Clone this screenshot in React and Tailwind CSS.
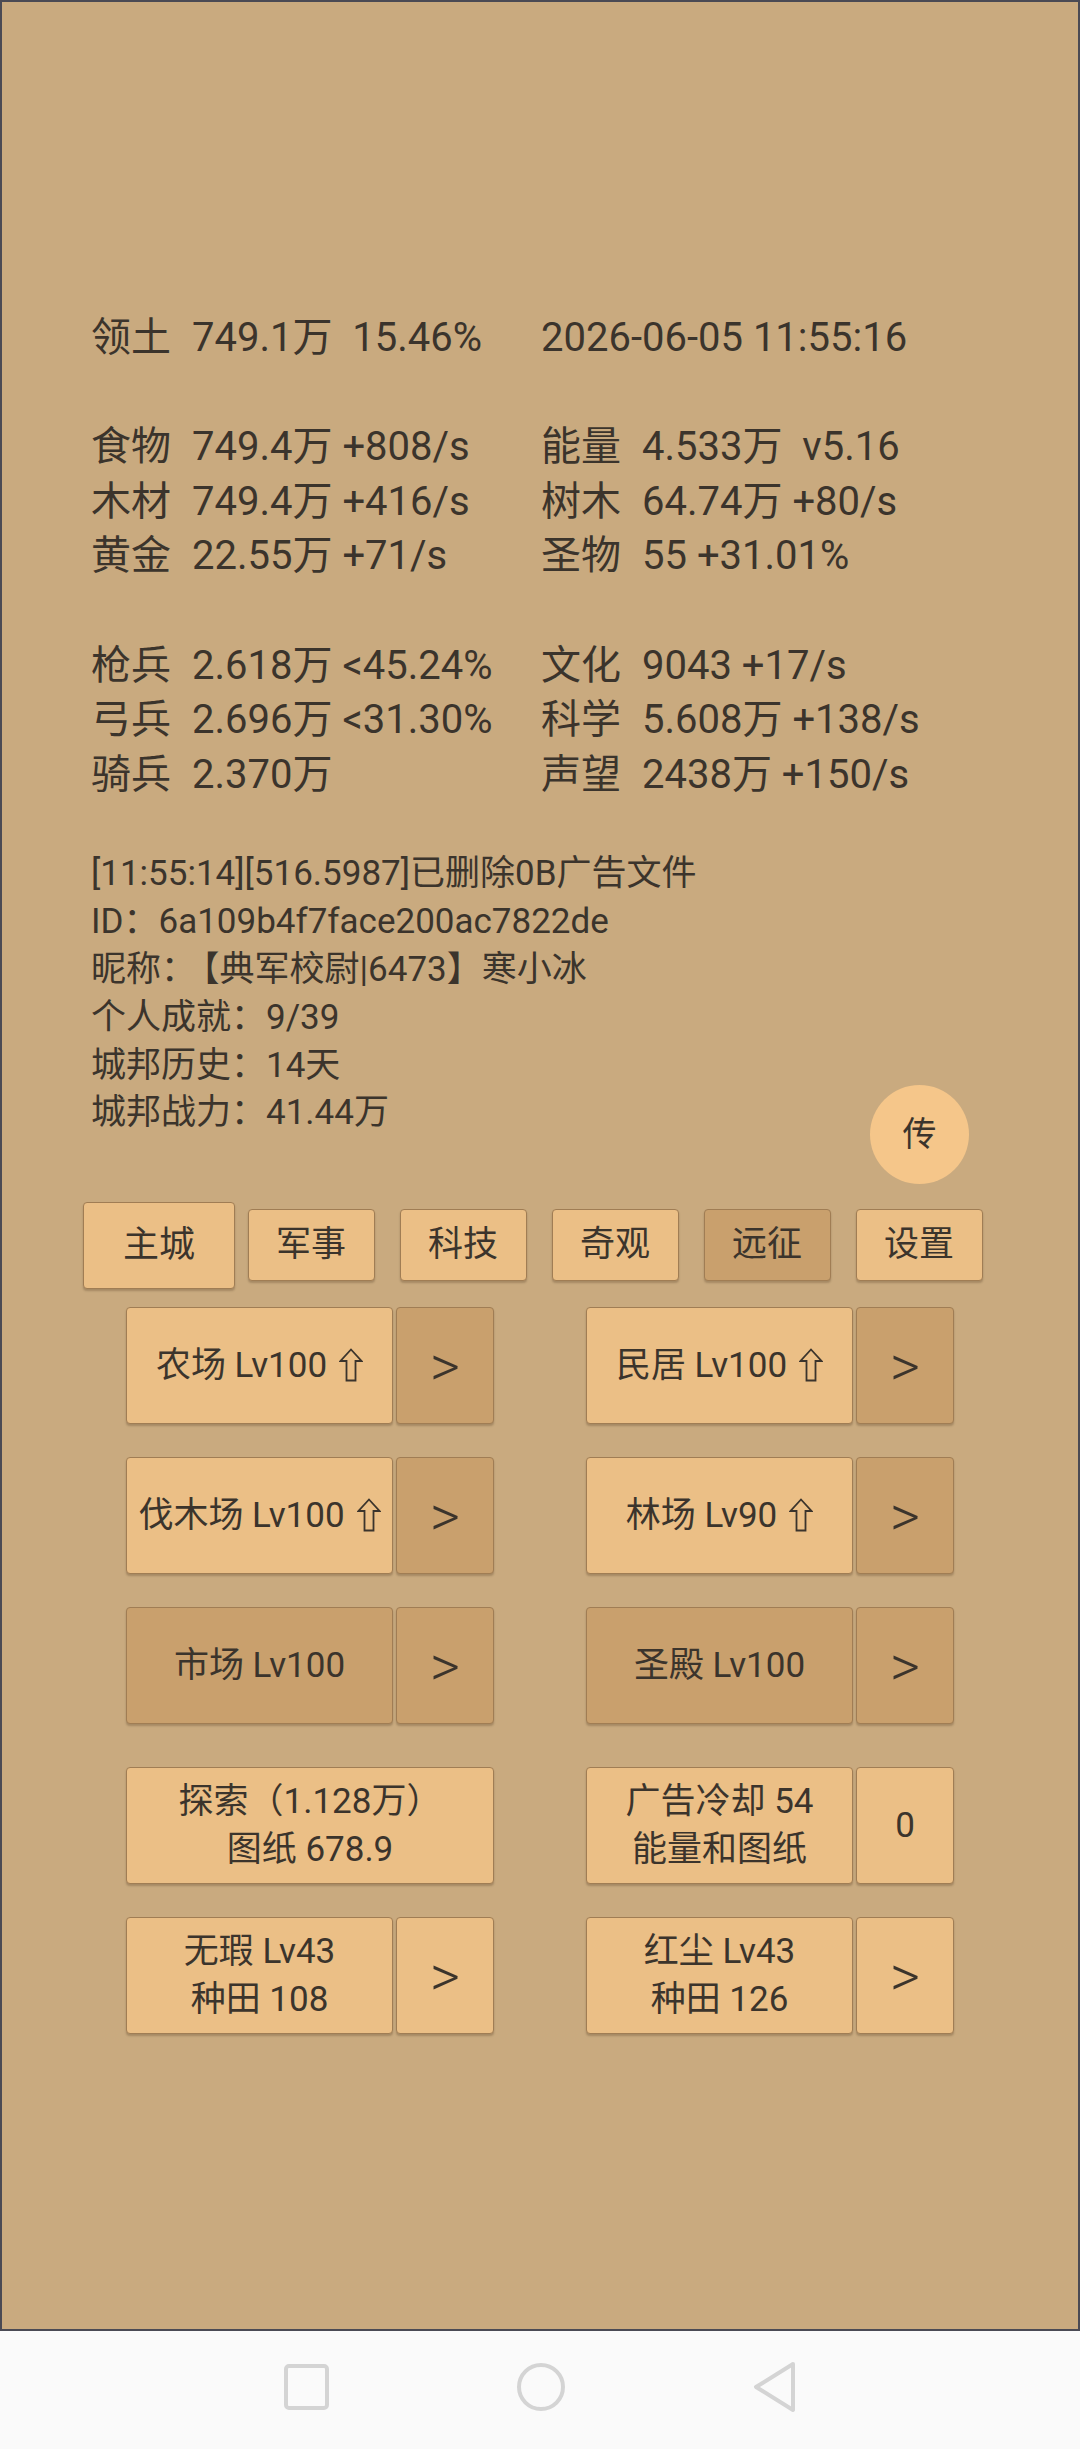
const stats = [
  [["领土", "749.1万  15.46%"], [null, "2026-06-05 11:55:16"]],
  null,
  [["食物", "749.4万 +808/s"], ["能量", "4.533万  v5.16"]],
  [["木材", "749.4万 +416/s"], ["树木", "64.74万 +80/s"]],
  [["黄金", "22.55万 +71/s"], ["圣物", "55 +31.01%"]],
  null,
  [["枪兵", "2.618万 <45.24%"], ["文化", "9043 +17/s"]],
  [["弓兵", "2.696万 <31.30%"], ["科学", "5.608万 +138/s"]],
  [["骑兵", "2.370万"], ["声望", "2438万 +150/s"]],
];

const logs = [
  "[11:55:14][516.5987]已删除0B广告文件",
  "ID：6a109b4f7face200ac7822de",
  null,
  "个人成就：9/39",
  "城邦历史：14天",
  "城邦战力：41.44万",
];

const tabs = ["军事", "科技", "奇观", "远征", "设置"];

const btnBase =
  "flex items-center justify-center rounded-[4px] border border-[#a07d54] shadow-[0_2px_2px_rgba(60,40,20,0.25)] text-[35px] leading-[48px] text-[#3b342c]";
const light = "bg-[#ebbf86]";
const dark = "bg-[#c9a06d]";

function Cell({ cell }) {
  const [label, value] = cell;
  return (
    <div className="flex w-[450px] whitespace-pre">
      {label && <span className="w-[101px] shrink-0">{label}</span>}
      <span>{value}</span>
    </div>
  );
}

function UpArrow() {
  return (
    <svg width="24" height="34" viewBox="0 0 24 34" className="ml-[12px] -mt-[2px]">
      <path
        d="M12 1.5 L22.5 13 H16.5 V32.5 H7.5 V13 H1.5 Z"
        fill="none"
        stroke="#3b342c"
        strokeWidth="1.8"
        strokeLinejoin="miter"
      />
    </svg>
  );
}

function Arrow({ tone = dark }) {
  return (
    <div className={`${btnBase} ${tone} w-[98px] h-[117px] text-[58px] font-light`}>
      &gt;
    </div>
  );
}

function Building({ name, up, tone = light, arrowTone = dark }) {
  return (
    <div className="flex gap-[3px]">
      <div className={`${btnBase} ${tone} w-[267px] h-[117px]`}>
        <span className="whitespace-pre">{name}</span>
        {up && <UpArrow />}
      </div>
      <Arrow tone={arrowTone} />
    </div>
  );
}

export default function App() {
  return (
    <div className="w-[1080px] h-[2449px] flex flex-col bg-[#fafafa] font-['Roboto','Noto_Sans_CJK_SC',sans-serif] text-[#3b342c]">
      <div className="relative h-[2331px] border-2 border-[#4a4a54] bg-[#c9aa7f]">
        <div className="pl-[89px] pt-[309px] text-[40px] leading-[54.6px]">
          {stats.map((row, i) =>
            row ? (
              <div key={i} className="flex">
                <Cell cell={row[0]} />
                <Cell cell={row[1]} />
              </div>
            ) : (
              <div key={i} className="h-[54.6px]" />
            )
          )}
        </div>

        <div className="pl-[89px] mt-[48px] text-[35px] leading-[47.8px] whitespace-pre">
          {logs.map((l, i) =>
            l ? (
              <div key={i}>{l}</div>
            ) : (
              <div key={i}>
                昵称：<span className="ml-[6px]">【典军校尉|6473】寒小冰</span>
              </div>
            )
          )}
        </div>

        <div className="absolute left-[868px] top-[1083px] w-[99px] h-[99px] rounded-full bg-[#f5c68a] flex items-center justify-center text-[34px]">
          传
        </div>

        <div className="mt-[64px] ml-[81px] flex h-[88px] items-center">
          <div className="w-[152px] flex justify-center">
            <div className={`${btnBase} ${light} w-[153px] h-[87px] text-[36px]`}>
              主城
            </div>
          </div>
          {tabs.map((t) => (
            <div key={t} className="w-[152px] flex justify-center">
              <div
                className={`${btnBase} ${t === "远征" ? dark : light} w-[127px] h-[72px] text-[30px]`}
              >
                {t}
              </div>
            </div>
          ))}
        </div>

        <div className="mt-[18px] flex flex-col items-center gap-[33px]">
          <div className="flex gap-[92px]">
            <Building name="农场 Lv100" up />
            <Building name="民居 Lv100" up />
          </div>
          <div className="flex gap-[92px]">
            <Building name="伐木场 Lv100" up />
            <Building name="林场 Lv90" up />
          </div>
          <div className="flex gap-[92px]">
            <Building name="市场 Lv100" tone={dark} />
            <Building name="圣殿 Lv100" tone={dark} />
          </div>
          <div className="flex gap-[92px] mt-[10px]">
            <div className={`${btnBase} ${light} w-[368px] h-[117px] flex-col`}>
              <div>探索（1.128万）</div>
              <div>图纸 678.9</div>
            </div>
            <div className="flex gap-[3px]">
              <div className={`${btnBase} ${light} w-[267px] h-[117px] flex-col`}>
                <div>广告冷却 54</div>
                <div>能量和图纸</div>
              </div>
              <div className={`${btnBase} ${light} w-[98px] h-[117px]`}>0</div>
            </div>
          </div>
          <div className="flex gap-[92px]">
            <div className="flex gap-[3px]">
              <div className={`${btnBase} ${light} w-[267px] h-[117px] flex-col`}>
                <div>无瑕 Lv43</div>
                <div>种田 108</div>
              </div>
              <Arrow tone={light} />
            </div>
            <div className="flex gap-[3px]">
              <div className={`${btnBase} ${light} w-[267px] h-[117px] flex-col`}>
                <div>红尘 Lv43</div>
                <div>种田 126</div>
              </div>
              <Arrow tone={light} />
            </div>
          </div>
        </div>
      </div>

      <div className="flex-1 flex items-center justify-center gap-[186px] pb-[6px]">
        <svg width="47" height="48" viewBox="0 0 47 48">
          <rect x="3" y="3" width="41" height="42" rx="3" fill="none" stroke="#d4d4d4" strokeWidth="4" />
        </svg>
        <svg width="50" height="50" viewBox="0 0 50 50">
          <circle cx="25" cy="25" r="22" fill="none" stroke="#d4d4d4" strokeWidth="4" />
        </svg>
        <svg width="46" height="52" viewBox="0 0 46 52">
          <path d="M41 3 L4 26 L41 49 Z" fill="none" stroke="#d4d4d4" strokeWidth="4" strokeLinejoin="round" />
        </svg>
      </div>
    </div>
  );
}
